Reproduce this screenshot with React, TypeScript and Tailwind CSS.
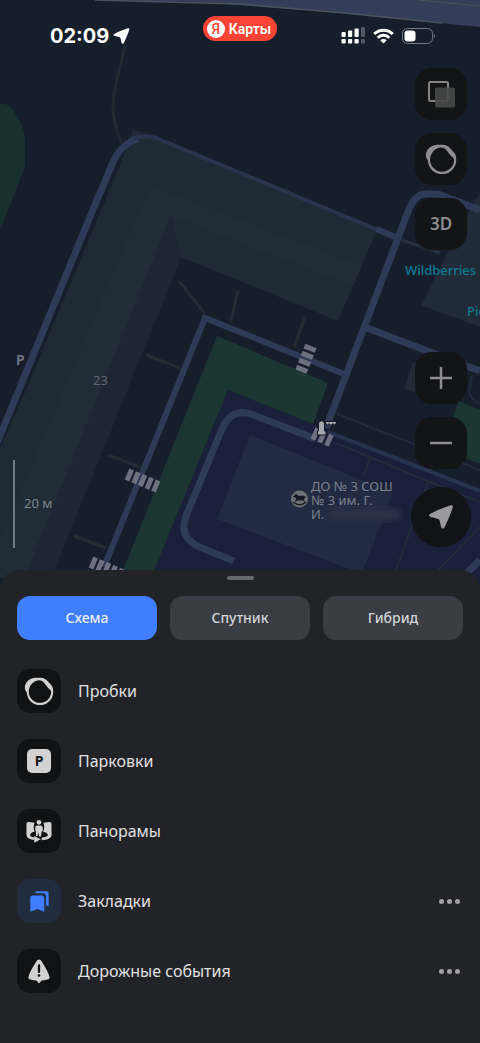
import { useState } from "react";
import type { ReactNode } from "react";

type LayerId = "traffic" | "parking" | "panorama" | "bookmarks" | "events";

interface Layer {
  id: LayerId;
  title: string;
  icon: ReactNode;
  hasMenu?: boolean;
}

const MAP_TYPES = ["Схема", "Спутник", "Гибрид"];

function TrafficIcon({ className }: { className?: string }) {
  return (
    <svg viewBox="70 351 90 85" className={className} fill="currentColor" aria-hidden="true">
      <path
        fillRule="evenodd"
        d="M72 386C71 366 88 353 105 353L120 353C129 353 135 357 141 363L152 375C157 381 158 387 158 394A40 40 0 0 1 78 399C77 395 73 392 72 386ZM116 361C122 361 127 364 130 368L141 382C145 387 152 390 152 396A34 34 0 0 1 84 395C84 377 99 361 116 361Z"
      />
    </svg>
  );
}

function ParkingIcon() {
  return (
    <span className="flex h-6 w-6 items-center justify-center rounded-[5px] bg-[#d2d2d2] font-['Noto_Sans',sans-serif] text-sm leading-none font-bold text-[#161718]">
      P
    </span>
  );
}

function PanoramaIcon() {
  return (
    <svg viewBox="0 0 76 68" className="h-[23px] w-[26px]" fill="currentColor" aria-hidden="true">
      <path d="M8 6L25 8C21 16 22 28 25 35C15 37 11 41 12 45C13 49 18 51 24 51V59C12 58 4 54 2 48C0 44 1 39 1 34V13C1 8 3 6 8 6Z" />
      <path d="M68 6L51 8C55 16 54 28 50 35C60 37 65 41 64 45C63 49 56 51 46 52V60C62 59 72 54 74 48C76 44 75 39 75 34V13C75 8 73 6 68 6Z" />
      <path d="M24 47L43 57L24 67Z" />
      <circle cx="38" cy="7" r="7" />
      <path d="M33 16H43C47 16 49 19 49 23V33H46L44 49H38L36 36L33 47H29V34L27 30V22C27 18 29 16 33 16Z" />
    </svg>
  );
}

function BookmarksIcon() {
  return (
    <svg viewBox="0 0 56 62" className="h-[21px] w-[19px]" fill="currentColor" aria-hidden="true">
      <path d="M15 6C16 2 19 1 23 1H48C53 1 55 3 55 8V46L47 42V16C47 9 44 7 38 7Z" />
      <path d="M8 13H34C39 13 42 16 42 21V61L22 53L1 61V21C1 16 3 13 8 13Z" />
    </svg>
  );
}

function EventsIcon() {
  return (
    <svg viewBox="0 0 66 74" className="h-[25px] w-[22px]" aria-hidden="true">
      <path
        fill="currentColor"
        d="M27 4C30 0 36 0 39 4C50 20 60 39 64 51C66 57 64 60 58 61C51 63 44 63 40 65L33 73L26 65C22 63 15 63 8 61C2 60 0 57 2 51C6 39 16 20 27 4Z"
      />
      <path d="M33 19V38" stroke="#121314" strokeWidth="7" strokeLinecap="round" />
      <circle cx="33" cy="49" r="4" fill="#121314" />
    </svg>
  );
}

function ArrowIcon({ className }: { className?: string }) {
  return (
    <svg viewBox="0 0 24 24" className={className} fill="currentColor" aria-hidden="true">
      <path d="M21.800 0.300C23.300 -0.100 24.200 0.900 23.800 2.300C21.500 9.500 18.500 16.500 15.300 22.700C14.600 24.100 12.700 24.100 12.200 22.600L10.600 15.600C10.400 14.700 9.900 14.300 9.100 14L1.200 11.800C-0.300 11.300 -0.400 9.600 1 8.900C7.500 5.500 14.500 2.500 21.800 0.300Z" />
    </svg>
  );
}

const LAYERS: Layer[] = [
  { id: "traffic", title: "Пробки", icon: <TrafficIcon className="h-[28px] w-[30px]" /> },
  { id: "parking", title: "Парковки", icon: <ParkingIcon /> },
  { id: "panorama", title: "Панорамы", icon: <PanoramaIcon /> },
  { id: "bookmarks", title: "Закладки", icon: <BookmarksIcon />, hasMenu: true },
  { id: "events", title: "Дорожные события", icon: <EventsIcon />, hasMenu: true },
];

function MapCanvas() {
  return (
    <svg
      viewBox="0 0 480 600"
      preserveAspectRatio="xMidYMin slice"
      className="absolute inset-0 h-full w-full"
      role="img"
      aria-label="Карта"
    >
      <rect width="480" height="600" fill="#171e2b" />

      {/* highway */}
      <path d="M95 0L200 2L340 13L480 27V0Z" fill="#343e5a" />
      <path d="M95 0L240 4L345 13L442 23" fill="none" stroke="#4b545d" strokeWidth="1.5" />
      <path d="M418 0L480 6" stroke="#4b545d" strokeWidth="1" />

      {/* park */}
      <path d="M0 103L8 105C17 113 25 130 25 140V166L12 200L0 229Z" fill="#19312e" />

      {/* school yard */}
      <path d="M228 390L313 424L480 488V600H142Z" fill="#1a2039" />
      <path d="M250 435L393 493L363 570L352 570L217 519Z" fill="#222b42" />

      {/* footpaths */}
      <g fill="none" stroke="#262c34" strokeWidth="3">
        <path d="M125 45C119 75 110 98 114 118C116 128 118 135 121 143" stroke="#212931" />
        <path d="M179 281L205 314M238 290L231 321M146 355L180 368M108 455L140 467M74 536L106 548M305 317L294 347" />
      </g>
      <g fill="none" stroke="#222c3a" strokeWidth="2">
        <path d="M337 414L480 470M336 443L430 482L480 502M370 457L364 475M428 482L396 570M480 527L438 570M472 376L469 390Q470 400 480 404" />
      </g>

      {/* residential block */}
      <path d="M133 130L156 137L377 230L338 321L181 257L51 578H-6V461L24 395L118 170Z" fill="#202a35" />
      <path d="M150 186L362 266L353 286L171 216L28 570L0 578V540Z" fill="#222c37" />
      <path d="M171 215L181 257L53 574H26Z" fill="#1e2633" />
      <path d="M475 200L480 195V327L421 305Z" fill="#212b37" />
      <path d="M413 362L426 368L419 394L404 388Z" fill="#222a35" />

      {/* lawns */}
      <path d="M217 336L328 383L313 424L228 390L151 578H120Z" fill="#1c3632" />
      <path d="M459 401L480 410V464L440 448Z" fill="#1c3632" />

      {/* roads */}
      <g fill="none" stroke="#2f3a56" strokeWidth="7" strokeLinejoin="round">
        <path d="M-5 448L97 200L114 160Q121 145 138 138" />
        <path d="M133 139Q145 134 156 138L378 230" strokeWidth="4" stroke="#2a344c" />
        <path d="M376 229L400 239" strokeWidth="6" />
        <path d="M104 567L205 318L344 374" strokeWidth="6" strokeLinejoin="miter" />
        <path d="M326 428L409 209Q415 195 424 194H438L480 210" />
        <path d="M367 328L480 371" />
        <path d="M234 561L202 548Q178 539 186 516L222 429Q231 408 251 414L316 439" />
        <path d="M328 432L480 491" strokeWidth="4" stroke="#28334e" />
        <path d="M456 584L480 560" />
      </g>
      <path d="M402 240L440 253" stroke="#262f40" strokeWidth="3" />

      {/* crossings */}
      <g stroke="#7b7f8e" strokeOpacity="0.85" strokeWidth="12">
        <path d="M311 346L300 374" strokeDasharray="5 2.500" />
        <path d="M127 474L158 487" strokeDasharray="5 2.200" />
        <path d="M91 562L124 576" strokeDasharray="5 2.200" />
        <path d="M313 433L333 442" strokeDasharray="5 2.500" />
      </g>

      {/* barrier */}
      <g fill="#a6a9b0" stroke="#10151f" strokeWidth="1">
        <path d="M318.500 423Q321.500 418.500 324.500 423V431H326V435H317.500V431H318.500Z" />
        <path d="M325 421.500H337L335 425.500L333 423.500L331 425.500L329 423.500L327 425.500Z" />
      </g>

      {/* school marker */}
      <circle cx="299.500" cy="499" r="8.500" fill="#6d7174" />
      <path d="M293 497L296 493.500L298.500 496L303 495.500L306 497L304 499L305 502L302.500 500.500H297L295 502.500L296 498Z" fill="#171b24" />
      <path d="M293 502Q300 507.500 306 502" fill="none" stroke="#171b24" strokeWidth="1.500" />

      {/* hidden part of the school name */}
      <defs>
        <filter id="smudge">
          <feGaussianBlur stdDeviation="3" />
        </filter>
      </defs>
      <rect x="330" y="508" width="70" height="13" fill="#2a3146" filter="url(#smudge)" />
    </svg>
  );
}

function MapLabels() {
  return (
    <div className="absolute top-0 left-1/2 h-[600px] w-[480px] -translate-x-1/2 overflow-hidden font-['Noto_Sans',sans-serif]">
      <span className="absolute top-[350px] left-4 text-sm font-semibold text-[#737a84]">P</span>
      <span className="absolute top-[370px] left-[93px] text-[13px] leading-5 text-[#626b76]">23</span>
      <span className="absolute top-[260px] left-[405px] text-[13px] leading-5 font-medium text-[#097b95]">
        Wildberries
      </span>
      <span className="absolute top-[301px] left-[467px] text-[13px] leading-5 font-medium text-[#097b95]">Pickup</span>
      <p className="absolute top-[479px] left-[311px] w-24 text-[13px] leading-[14px] whitespace-pre-line text-[#7b818c]">
        {"ДО № 3 СОШ\n№ 3 им. Г.\nИ."}
      </p>
    </div>
  );
}

function StatusBar() {
  return (
    <header className="grid grid-cols-[1fr_auto_1fr] items-start text-white">
      <div className="flex items-center gap-1 pt-6 pl-[50px]">
        <span className="font-[Inter,sans-serif] text-xl leading-6 font-bold">02:09</span>
        <ArrowIcon className="h-4 w-[17px]" />
      </div>
      <div className="mt-4 flex h-[25px] items-center gap-1 rounded-full bg-[#fa4334] pr-1.5 pl-1">
        <span className="flex h-[18px] w-[18px] items-center justify-center rounded-full bg-white font-[Roboto,sans-serif] text-sm leading-none font-medium text-[#fa4334]">
          Я
        </span>
        <span className="font-[Roboto,sans-serif] text-sm leading-none font-semibold">Карты</span>
      </div>
      <div className="flex items-center justify-end gap-2 pt-[27px] pr-11">
        <svg viewBox="0 0 24 17" className="h-[17px] w-6" fill="#fff" aria-hidden="true">
          <rect x="0.500" y="5" width="4.200" height="5" rx="1" />
          <rect x="7" y="3.500" width="4.200" height="6.500" rx="1" />
          <rect x="13.500" y="1.500" width="4.200" height="8.500" rx="1" />
          <rect x="20" y="0" width="4" height="10" rx="1" opacity="0.25" />
          <rect x="0.500" y="12" width="4.200" height="4.500" rx="1" />
          <rect x="7" y="12" width="4.200" height="4.500" rx="1" />
          <rect x="13.500" y="12" width="4.200" height="4.500" rx="1" />
          <rect x="20" y="12" width="4" height="4.500" rx="1" opacity="0.25" />
        </svg>
        <svg viewBox="0 0 21 16" className="h-4 w-[21px]" fill="none" stroke="#fff" strokeWidth="3" aria-hidden="true">
          <path d="M1.200 6A13.200 13.200 0 0 1 19.800 6" />
          <path d="M4.700 9.700A8.300 8.300 0 0 1 16.300 9.700" />
          <path d="M10.500 15.500L7.300 12.300A4.500 4.500 0 0 1 13.700 12.300Z" fill="#fff" stroke="none" />
        </svg>
        <svg viewBox="0 0 34 16" className="h-4 w-[34px]" aria-hidden="true">
          <rect x="0.500" y="0.500" width="30" height="15" rx="5" fill="none" stroke="#747a83" />
          <rect x="2.500" y="2.500" width="11" height="11" rx="3" fill="#fff" />
          <path d="M32 5.500Q34 8 32 10.500Z" fill="#747a83" />
        </svg>
      </div>
    </header>
  );
}

function MapButton({ label, children }: { label: string; children: ReactNode }) {
  return (
    <button
      aria-label={label}
      className="flex h-[52px] w-[52px] items-center justify-center rounded-[17px] bg-[#121416] text-[#8e8e90]"
    >
      {children}
    </button>
  );
}

function MapControls() {
  return (
    <div className="mt-5 flex flex-col items-end px-[13px]">
      <div className="flex flex-col gap-[13px]">
        <MapButton label="Слои">
          <svg viewBox="0 0 28 28" className="h-7 w-7" aria-hidden="true">
            <rect x="2" y="2" width="19" height="19" rx="1.500" fill="none" stroke="#858585" strokeWidth="2" />
            <rect x="8" y="7.500" width="20" height="20" rx="1.500" fill="#484848" fillOpacity="0.9" />
          </svg>
        </MapButton>
        <MapButton label="Пробки">
          <TrafficIcon className="h-[30px] w-8" />
        </MapButton>
        <MapButton label="3D">
          <span className="font-['Noto_Sans',sans-serif] text-[17px] leading-6 font-semibold">3D</span>
        </MapButton>
      </div>
      <div className="mt-[102px] flex flex-col gap-[13px]">
        <MapButton label="Приблизить">
          <svg viewBox="0 0 24 24" className="h-6 w-6" stroke="currentColor" strokeWidth="2.500" aria-hidden="true">
            <path d="M1 12H23M12 1V23" />
          </svg>
        </MapButton>
        <MapButton label="Отдалить">
          <svg viewBox="0 0 24 24" className="h-6 w-6" stroke="currentColor" strokeWidth="2.500" aria-hidden="true">
            <path d="M1 12H23" />
          </svg>
        </MapButton>
      </div>
      <button
        aria-label="Моё местоположение"
        className="-mr-1 mt-[18px] flex h-[60px] w-[60px] items-center justify-center rounded-full bg-[#111316] text-[#9a9a9c]"
      >
        <ArrowIcon className="h-6 w-6" />
      </button>
    </div>
  );
}

function ScaleBar() {
  return (
    <div className="absolute bottom-[22px] left-[13px] flex h-[88px] items-center border-l-2 border-[#6e787d] pl-[9px] font-['Noto_Sans',sans-serif] text-[13px] text-[#7d868e]">
      20 м
    </div>
  );
}

function LayerRow({ layer, active, onToggle }: { layer: Layer; active: boolean; onToggle: () => void }) {
  return (
    <li className="flex h-[70px] items-center justify-between">
      <button onClick={onToggle} aria-pressed={active} className="flex flex-1 items-center gap-[17px] text-left">
        <span
          className={`flex h-11 w-11 items-center justify-center rounded-[13px] ${
            active ? "bg-[#212c3f] text-[#3d7dfc]" : "bg-[#111213] text-[#d2d2d2]"
          }`}
        >
          {layer.icon}
        </span>
        <span className="text-base text-[#e0e0e1]">{layer.title}</span>
      </button>
      {layer.hasMenu && (
        <button aria-label={`Настройки: ${layer.title}`} className="flex h-6 w-7 items-center justify-center gap-[3px]">
          <span className="h-[5px] w-[5px] rounded-full bg-[#a0a0a2]" />
          <span className="h-[5px] w-[5px] rounded-full bg-[#a0a0a2]" />
          <span className="h-[5px] w-[5px] rounded-full bg-[#a0a0a2]" />
        </button>
      )}
    </li>
  );
}

export default function App() {
  const [mapType, setMapType] = useState("Схема");
  const [enabled, setEnabled] = useState<LayerId[]>(["bookmarks"]);

  const toggle = (id: LayerId) =>
    setEnabled((prev) => (prev.includes(id) ? prev.filter((x) => x !== id) : [...prev, id]));

  return (
    <div className="relative flex min-h-screen flex-col bg-[#222326] font-['Noto_Sans',sans-serif]">
      <div className="absolute inset-x-0 top-0 h-[600px] overflow-hidden">
        <MapCanvas />
        <MapLabels />
      </div>

      <main className="relative pb-[23px]">
        <StatusBar />
        <MapControls />
        <ScaleBar />
      </main>

      <section className="relative flex-1 rounded-t-[20px] bg-[#222326] px-[17px] pt-1.5 pb-9">
        <div className="mx-auto h-1 w-[27px] rounded-full bg-[#68696b]" />
        <div className="mt-4 grid grid-cols-3 gap-[13px]">
          {MAP_TYPES.map((type) => (
            <button
              key={type}
              onClick={() => setMapType(type)}
              aria-pressed={type === mapType}
              className={`h-11 rounded-[13px] text-sm font-medium ${
                type === mapType ? "bg-[#3f7eff] text-[#e8eefc]" : "bg-[#3a3d44] text-[#d3d4d6]"
              }`}
            >
              {type}
            </button>
          ))}
        </div>

        <ul className="mt-4">
          {LAYERS.map((layer) => (
            <LayerRow
              key={layer.id}
              layer={layer}
              active={enabled.includes(layer.id)}
              onToggle={() => toggle(layer.id)}
            />
          ))}
        </ul>
      </section>
    </div>
  );
}
